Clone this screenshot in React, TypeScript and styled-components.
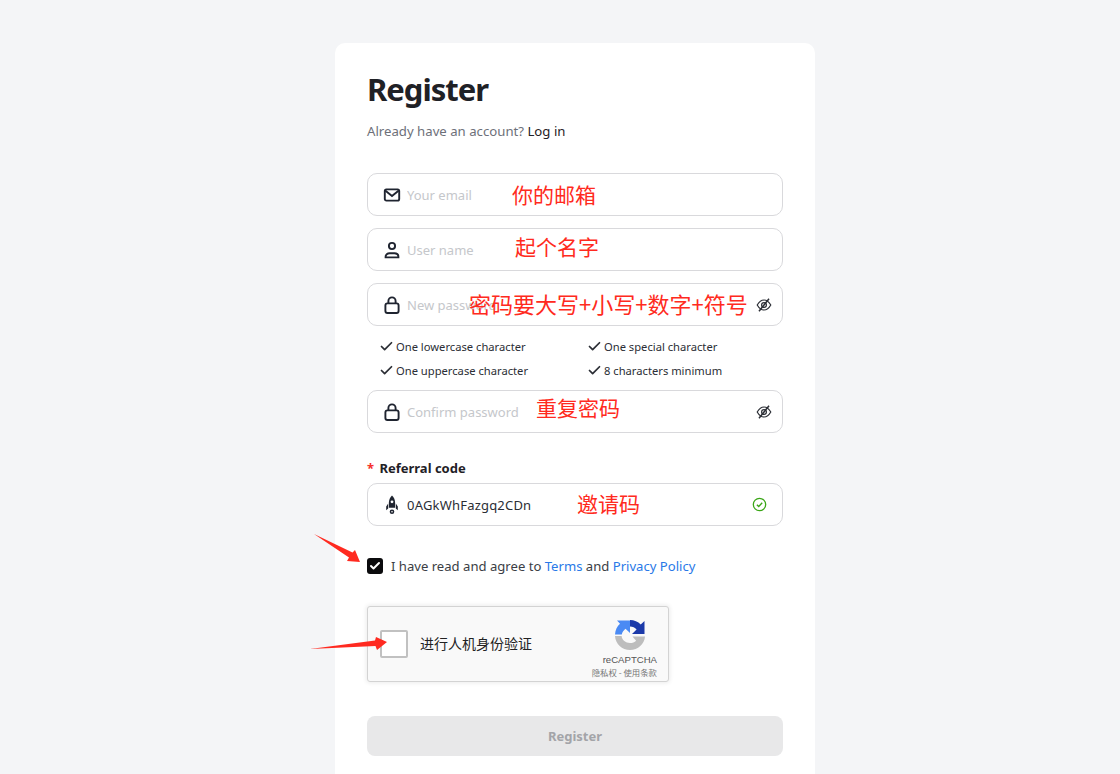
import styled, { createGlobalStyle } from "styled-components";
import { Check } from "lucide-react";

const GlobalStyle = createGlobalStyle`
  html, body {
    margin: 0;
    height: 100%;
    background: #f4f5f7;
    overflow: hidden;
  }
  * { box-sizing: border-box; }
  body {
    font-family: "Noto Sans", "Open Sans", "Noto Sans CJK SC", sans-serif;
    color: #1f2126;
  }
`;

const RED = "#ff2a20";

const RULES = [
  "One lowercase character",
  "One special character",
  "One uppercase character",
  "8 characters minimum",
];

function MailIcon() {
  return (
    <svg width="18" height="18" viewBox="0 0 18 18" fill="none" stroke="#1f2430" strokeWidth="1.9">
      <rect x="1.8" y="3.4" width="14.4" height="11.2" rx="1.6" />
      <path d="M2.2 4.4 9 10l6.8-5.6" />
    </svg>
  );
}

function UserIcon() {
  return (
    <svg width="18" height="18" viewBox="0 0 18 18" fill="none" stroke="#1f2430" strokeWidth="1.9">
      <circle cx="9" cy="5" r="3.1" />
      <path d="M2.6 16.4v-.6c0-2.2 1.8-3.6 4-3.6h4.8c2.2 0 4 1.4 4 3.6v.6z" />
    </svg>
  );
}

function LockIcon() {
  return (
    <svg width="18" height="18" viewBox="0 0 18 18" fill="none" stroke="#1f2430" strokeWidth="1.9">
      <rect x="2.4" y="7.4" width="13.2" height="9.6" rx="2" />
      <path d="M5.4 7.4V5a3.6 3.6 0 0 1 7.2 0v2.4" />
    </svg>
  );
}

function HiddenEye() {
  return (
    <svg width="16" height="16" viewBox="0 0 16 16" fill="none" stroke="#2b2e35" strokeWidth="1.2">
      <path d="M1.2 8C3.2 4.6 5.4 3 8 3s4.8 1.6 6.8 5c-2 3.4-4.2 5-6.8 5S3.2 11.4 1.2 8z" />
      <circle cx="8" cy="8" r="2.4" />
      <path d="M3 14.2 13 1.8" strokeWidth="1.5" />
    </svg>
  );
}

function RocketIcon() {
  return (
    <svg width="18" height="20" viewBox="0 0 18 20" fill="#1f2430">
      <path d="M9 .5C7 2.4 5.9 5 5.9 7.6v5.2h6.2V7.600C12.1 5 11 2.4 9 .5z" />
      <path d="M5.2 8.4 3.2 11.4v3.8l2-1.6zM12.8 8.4l2 3v3.8l-2-1.6z" />
      <circle cx="9" cy="6.8" r="1.4" fill="#fff" />
      <circle cx="9" cy="16.8" r="2.3" />
      <circle cx="9" cy="16.8" r="0.8" fill="#fff" />
    </svg>
  );
}

function RecaptchaLogo() {
  return (
    <svg width="32" height="32" viewBox="0 0 32 32">
      <path d="M1 15.5C1.3 11 3.2 7.3 6 4.8L3 1.5H16V14l-4.5-4.2C9.8 11.2 8.2 13 7.8 15.5z" fill="#4a8af4" />
      <path d="M16 1c4.2 0 8 1.7 10.700 4.500L30.500 2v13H18l4.600-4.600C21 8.700 18.700 7.600 16 7.600z" fill="#1c3aa9" />
      <path d="M1 17h6.600c.4 4 4 7 8.400 7 2.500 0 4.600-.8 6.100-2.300L18.500 17.500H31C30.500 25 24 31 16 31 8 31 1.500 25 1 17z" fill="#bdbdbd" />
    </svg>
  );
}

export default function App() {
  return (
    <Page>
      <GlobalStyle />
      <Card>
        <Title>Register</Title>
        <Subtitle>
          Already have an account? <DarkLink href="#">Log in</DarkLink>
        </Subtitle>

        <Fields>
          <Field $mb={12}>
            <MailIcon />
            <Input placeholder="Your email" />
            <Note $left={144} $dy={-1}>你的邮箱</Note>
          </Field>
          <Field $mb={12}>
            <UserIcon />
            <Input placeholder="User name" />
            <Note $left={147} $dy={-4}>起个名字</Note>
          </Field>
          <Field>
            <LockIcon />
            <Input placeholder="New password" />
            <Note $left={101} $size={22} $dy={-2}>密码要大写+小写+数字+符号</Note>
            <HiddenEye />
          </Field>
          <Rules>
            {RULES.map((rule) => (
              <Rule key={rule}>
                <Check size={15} strokeWidth={2.8} />
                {rule}
              </Rule>
            ))}
          </Rules>
          <Field>
            <LockIcon />
            <Input placeholder="Confirm password" />
            <Note $left={168} $dy={-5}>重复密码</Note>
            <HiddenEye />
          </Field>
        </Fields>

        <Label>
          <Star>*</Star> Referral code
        </Label>
        <Field>
          <RocketIcon />
          <Input readOnly value="0AGkWhFazgq2CDn" />
          <Note $left={209} $dy={-2}>邀请码</Note>
          <ValidMark viewBox="0 0 16 16">
            <circle cx="8" cy="8" r="6.6" fill="none" stroke="#3aa617" strokeWidth="1.4" />
            <path d="M5.2 8.2 7.2 10.2 10.9 6.2" fill="none" stroke="#3aa617" strokeWidth="1.4" />
          </ValidMark>
        </Field>

        <Agree>
          <Tick>
            <Check size={12} strokeWidth={4} color="#fff" />
          </Tick>
          <span>
            I have read and agree to <BlueLink href="#">Terms</BlueLink> and{" "}
            <BlueLink href="#">Privacy Policy</BlueLink>
          </span>
        </Agree>

        <Captcha>
          <CaptchaBox />
          <CaptchaText>进行人机身份验证</CaptchaText>
          <CaptchaBrand>
            <LogoSlot>
              <RecaptchaLogo />
            </LogoSlot>
            <BrandName>reCAPTCHA</BrandName>
            <BrandLinks>隐私权 - 使用条款</BrandLinks>
          </CaptchaBrand>
        </Captcha>

        <Submit disabled>Register</Submit>

        <Arrow $left={-21} $top={491} width="50" height="32" viewBox="0 0 50 32">
          <path d="M0 0 38.500 18.500 41 16 46 28 33 27 35 23.500z" fill={RED} />
        </Arrow>
        <Arrow $left={-25} $top={587} width="80" height="24" viewBox="0 0 80 24">
          <path d="M0 19 65 10.500 66 7 77 12 67 20 65.500 16z" fill={RED} />
        </Arrow>
      </Card>
    </Page>
  );
}

const Page = styled.div`
  height: 774px;
  padding: 43px 0 0 30px;
  display: flex;
  justify-content: center;
  overflow: hidden;
`;

const Card = styled.main`
  position: relative;
  width: 480px;
  height: 760px;
  padding: 23px 32px;
  background: #fff;
  border-radius: 10px;
`;

const Title = styled.h1`
  margin: 0;
  font-size: 31px;
  line-height: 46px;
  font-weight: 700;
  letter-spacing: -1px;
  color: #1f2126;
`;

const Subtitle = styled.p`
  margin: 9px 0 32px;
  font-size: 13.2px;
  line-height: 20px;
  color: #6d7079;
`;

const DarkLink = styled.a`
  color: #1f2126;
  text-decoration: none;
`;

const Fields = styled.div`
  display: flex;
  flex-direction: column;
`;

const Field = styled.div<{ $mb?: number }>`
  position: relative;
  height: 43px;
  margin-bottom: ${(p) => p.$mb ?? 0}px;
  padding: 0 10px 0 15px;
  display: flex;
  align-items: center;
  gap: 6px;
  flex: none;
  background: #fff;
  border: 1px solid #d9d9dc;
  border-radius: 10px;
  color: #1f2430;

  & > svg {
    flex: none;
  }
`;

const Input = styled.input`
  flex: 1;
  min-width: 0;
  padding: 0;
  border: 0;
  outline: 0;
  background: transparent;
  font: inherit;
  font-size: 13px;
  letter-spacing: 0.2px;
  color: #2b2e35;

  &::placeholder {
    color: #c5c7cb;
    letter-spacing: 0;
    opacity: 1;
  }
`;

const Note = styled.span<{ $left: number; $size?: number; $dy?: number }>`
  position: absolute;
  left: ${(p) => p.$left}px;
  top: calc(50% + ${(p) => p.$dy ?? 0}px);
  transform: translateY(-50%);
  font-family: "Noto Sans CJK SC", sans-serif;
  font-size: ${(p) => p.$size ?? 21}px;
  line-height: 28px;
  color: ${RED};
  white-space: nowrap;
`;

const Rules = styled.ul`
  list-style: none;
  margin: 0;
  padding: 10px 0 10px 12px;
  display: grid;
  grid-template-columns: 208px 1fr;
  row-gap: 4px;
`;

const Rule = styled.li`
  display: flex;
  align-items: center;
  gap: 2px;
  height: 20px;
  font-size: 11.2px;
  color: #2b2e35;
`;

const Label = styled.div`
  margin: 25px 0 5px;
  font-size: 13px;
  line-height: 20px;
  font-weight: 700;
  color: #1f2126;
`;

const Star = styled.span`
  color: #f5312c;
  margin-right: 2px;
`;

const ValidMark = styled.svg`
  width: 15px;
  height: 15px;
  margin-right: 5px;
`;

const Agree = styled.label`
  margin-top: 32px;
  display: flex;
  align-items: center;
  gap: 8px;
  height: 16px;
  font-size: 13.1px;
  color: #3b3e45;
`;

const Tick = styled.span`
  width: 16px;
  height: 16px;
  flex: none;
  display: flex;
  align-items: center;
  justify-content: center;
  background: #0b0b0d;
  border-radius: 3px;
`;

const BlueLink = styled.a`
  color: #2979e8;
  text-decoration: none;
`;

const Captcha = styled.div`
  margin-top: 32px;
  width: 302px;
  height: 76px;
  padding: 0 11px 0 12px;
  display: flex;
  align-items: center;
  background: #f9f9f9;
  border: 1px solid #d3d3d3;
  border-radius: 3px;
  box-shadow: 0 0 4px 1px rgba(0, 0, 0, 0.08);
`;

const CaptchaBox = styled.div`
  width: 28px;
  height: 28px;
  flex: none;
  background: #fff;
  border: 2px solid #c1c1c1;
  border-radius: 2px;
`;

const CaptchaText = styled.span`
  margin: -2px 0 0 12px;
  flex: 1;
  font-family: "Noto Sans CJK SC", sans-serif;
  font-size: 14px;
  color: #222;
`;

const CaptchaBrand = styled.div`
  display: flex;
  flex-direction: column;
  align-items: flex-end;
  width: 66px;
  padding-top: 8px;
  color: #555;
`;

const LogoSlot = styled.div`
  height: 32px;
  margin-right: 11px;
`;

const BrandName = styled.span`
  margin-top: 2px;
  font-family: "Liberation Sans", sans-serif;
  font-size: 9.6px;
  line-height: 13px;
`;

const BrandLinks = styled.span`
  font-family: "Noto Sans CJK SC", sans-serif;
  font-size: 8.4px;
  line-height: 12px;
  color: #777;
  white-space: nowrap;
`;

const Submit = styled.button`
  margin-top: 34px;
  width: 100%;
  height: 40px;
  border: 0;
  border-radius: 8px;
  background: #e8e8e9;
  font: inherit;
  font-size: 13px;
  font-weight: 700;
  color: #a3a4a8;
`;

const Arrow = styled.svg<{ $left: number; $top: number }>`
  position: absolute;
  left: ${(p) => p.$left}px;
  top: ${(p) => p.$top}px;
`;
